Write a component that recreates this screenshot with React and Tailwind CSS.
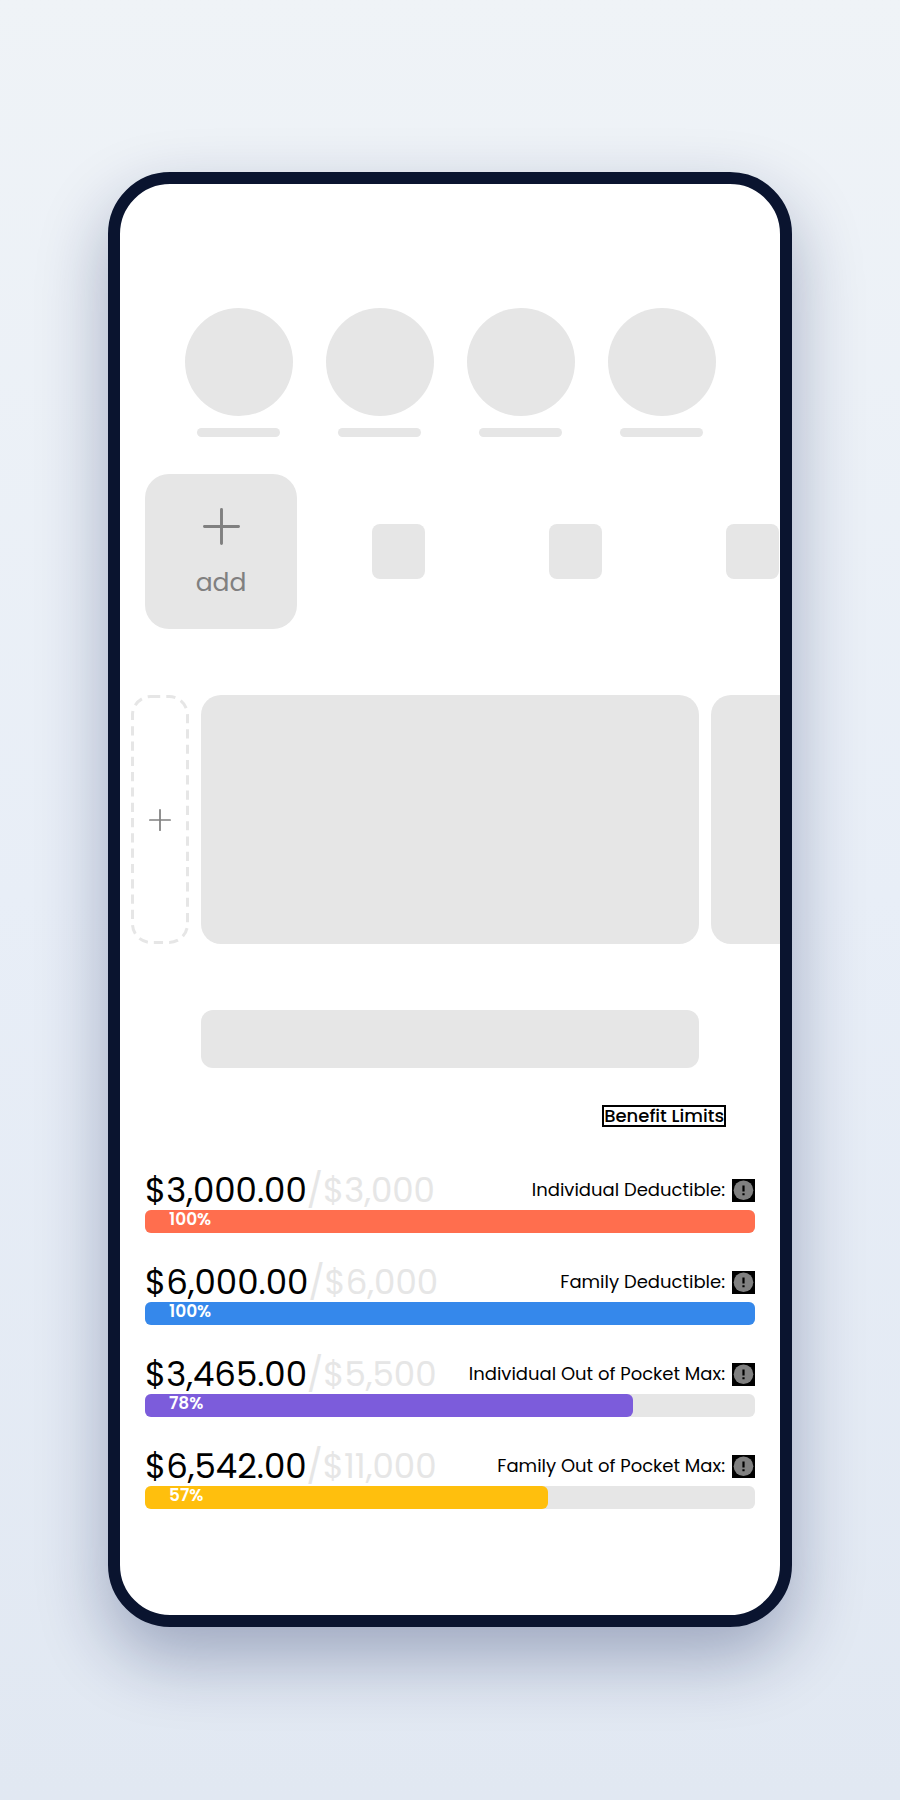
// src/App.jsx
import React from "react";

const benefits = [
  { label: "Individual Deductible:", used: "$3,000.00", total: "$3,000", percent: "100%", width: 100, color: "bg-[#ff6e4e]" },
  { label: "Family Deductible:", used: "$6,000.00", total: "$6,000", percent: "100%", width: 100, color: "bg-[#3588eb]" },
  { label: "Individual Out of Pocket Max:", used: "$3,465.00", total: "$5,500", percent: "78%", width: 80, color: "bg-[#7c5cdb]" },
  { label: "Family Out of Pocket Max:", used: "$6,542.00", total: "$11,000", percent: "57%", width: 66, color: "bg-[#ffbf0d]" },
];

function PlusIcon({ className, strokeWidth }) {
  return (
    <svg viewBox="0 0 38 38" className={className} fill="none" stroke="#808080" strokeWidth={strokeWidth} strokeLinecap="round" aria-hidden="true">
      <path d="M19 1.5v35M1.5 19h35" />
    </svg>
  );
}

function InfoIcon() {
  return (
    <svg viewBox="0 0 23 23" className="size-[23px]" aria-hidden="true">
      <rect width="23" height="23" fill="#000" />
      <circle cx="11.5" cy="11.2" r="9.8" fill="#808080" />
      <path d="M10.4 6.5h2.2v6h-2.2zM10.4 14.2h2.2v2.1h-2.2z" fill="#000" />
    </svg>
  );
}

function BenefitRow({ label, used, total, percent, width, color }) {
  return (
    <li>
      <div className="flex h-10 items-center justify-between whitespace-nowrap">
        <p className="text-[34px] leading-10 text-black">
          {used}
          <span className="text-[#e6e6e6]">/{total}</span>
        </p>
        <div className="flex items-center gap-[7px]">
          <span className="text-[18px] leading-6 text-black">{label}</span>
          <button type="button" aria-label={`About ${label}`}>
            <InfoIcon />
          </button>
        </div>
      </div>
      <div className="h-[23px] rounded-md bg-[#e6e6e6]">
        <div className={`h-full rounded-md pl-6 ${color}`} style={{ width: `${width}%` }}>
          <span className="block text-[17px] leading-[19px] font-semibold text-white">{percent}</span>
        </div>
      </div>
    </li>
  );
}

export default function App() {
  return (
    <div className="min-h-screen bg-linear-to-b from-[#eff3f7] via-[#e8eef7] to-[#e1e8f2] px-[108px] py-[172px] font-['Poppins','Inter',sans-serif]">
      <main className="mx-auto w-full max-w-[684px] overflow-hidden rounded-[62px] border-12 border-[#0a142f] bg-white pt-[124px] pb-[106px] shadow-[0_30px_70px_rgba(10,25,80,0.32)]">
        <div className="flex justify-center gap-[33px]">
          {[0, 1, 2, 3].map((i) => (
            <div key={i} className="flex flex-col items-center gap-3">
              <div className="size-[108px] rounded-full bg-[#e6e6e6]" />
              <div className="h-[9px] w-[83px] rounded-full bg-[#e6e6e6]" />
            </div>
          ))}
        </div>

        <div className="mt-[37px] flex items-center gap-[25px] overflow-hidden pl-[25px]">
          <button
            type="button"
            className="flex h-[155px] w-[152px] shrink-0 flex-col items-center justify-center gap-5 rounded-3xl bg-[#e6e6e6] pt-[5px] text-[#808080]"
          >
            <PlusIcon className="size-[37px]" strokeWidth="3" />
            <span className="text-[25px] leading-9">add</span>
          </button>
          {[0, 1, 2].map((i) => (
            <div key={i} className="flex w-[152px] shrink-0 justify-center">
              <div className="h-[55px] w-[53px] rounded-lg bg-[#e6e6e6]" />
            </div>
          ))}
        </div>

        <div className="mt-[66px] flex gap-3 overflow-hidden pl-[11px]">
          <button
            type="button"
            aria-label="Add card"
            className="relative flex h-[249px] w-[58px] shrink-0 items-center justify-center rounded-[20px]"
          >
            <svg viewBox="0 0 58 249" className="absolute inset-0 size-full" fill="none" aria-hidden="true">
              <rect x="1.5" y="1.5" width="55" height="246" rx="18.5" stroke="#e6e6e6" strokeWidth="3" strokeDasharray="9.2 6.1" />
            </svg>
            <PlusIcon className="size-[22px]" strokeWidth="3" />
          </button>
          <div className="h-[249px] w-[498px] shrink-0 rounded-[20px] bg-[#e6e6e6]" />
          <div className="h-[249px] w-[498px] shrink-0 rounded-[20px] bg-[#e6e6e6]" />
        </div>

        <div className="mx-[81px] mt-[66px] h-[58px] rounded-xl bg-[#e6e6e6]" />

        <div className="mt-[37px] mr-[54px] flex justify-end">
          <button type="button" className="border-2 border-black text-[18px] leading-[18px] font-medium text-black">
            Benefit Limits
          </button>
        </div>

        <ul className="mx-[25px] mt-[43px] flex flex-col gap-[29px]">
          {benefits.map((benefit) => (
            <BenefitRow key={benefit.label} {...benefit} />
          ))}
        </ul>
      </main>
    </div>
  );
}
